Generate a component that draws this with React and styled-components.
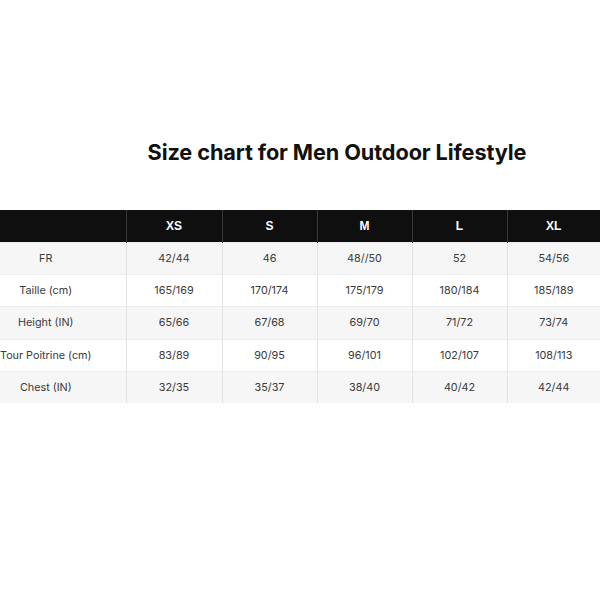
import React from 'react';
import styled, { createGlobalStyle } from 'styled-components';

const GlobalStyle = createGlobalStyle`
  body {
    margin: 0;
    background: #ffffff;
    font-family: Inter, "Liberation Sans", Arial, sans-serif;
  }
`;

const Page = styled.div`
  width: 600px;
  height: 600px;
  padding-top: 138px;
  box-sizing: border-box;
`;

const Title = styled.h2`
  margin: 0 0 44px;
  padding-left: 74px;
  text-align: center;
  font-size: 21.7px;
  line-height: 28px;
  font-weight: 700;
  color: #111111;
  letter-spacing: -0.1px;
`;

const Table = styled.table`
  width: 600px;
  border-collapse: collapse;
  table-layout: fixed;
`;

const HeadCell = styled.th`
  background: #0f0f0f;
  color: #ffffff;
  height: 32px;
  padding: 0;
  font-family: "Liberation Sans", Arial, sans-serif;
  font-size: 12px;
  font-weight: 700;
  text-align: center;
  border-left: 1px solid #3a3a3a;
  &:first-child {
    border-left: none;
  }
`;

const Row = styled.tr`
  background: ${props => (props.$shaded ? '#f6f6f6' : '#ffffff')};
  border-top: 1px solid #ececec;
`;

const Cell = styled.td`
  height: 31.2px;
  padding: 0;
  font-size: 10.8px;
  color: #3a3a3a;
  text-align: center;
  border-left: 1px solid #e4e4e4;
  &:first-child {
    border-left: none;
    padding-right: 34px;
  }
`;

const sizes = ['XS', 'S', 'M', 'L', 'XL'];
const widths = [126, 96, 95, 95, 95, 93];

const rows = [
  { label: 'FR', values: ['42/44', '46', '48//50', '52', '54/56'] },
  { label: 'Taille (cm)', values: ['165/169', '170/174', '175/179', '180/184', '185/189'] },
  { label: 'Height (IN)', values: ['65/66', '67/68', '69/70', '71/72', '73/74'] },
  { label: 'Tour Poitrine (cm)', values: ['83/89', '90/95', '96/101', '102/107', '108/113'] },
  { label: 'Chest (IN)', values: ['32/35', '35/37', '38/40', '40/42', '42/44'] },
];

export default function App() {
  return (
    <Page>
      <GlobalStyle />
      <Title>Size chart for Men Outdoor Lifestyle</Title>
      <Table>
        <colgroup>
          {widths.map((w, i) => (
            <col key={i} style={{ width: w }} />
          ))}
        </colgroup>
        <thead>
          <tr>
            <HeadCell />
            {sizes.map(s => (
              <HeadCell key={s}>{s}</HeadCell>
            ))}
          </tr>
        </thead>
        <tbody>
          {rows.map((row, i) => (
            <Row key={row.label} $shaded={i % 2 === 0}>
              <Cell>{row.label}</Cell>
              {row.values.map((v, j) => (
                <Cell key={j}>{v}</Cell>
              ))}
            </Row>
          ))}
        </tbody>
      </Table>
    </Page>
  );
}
